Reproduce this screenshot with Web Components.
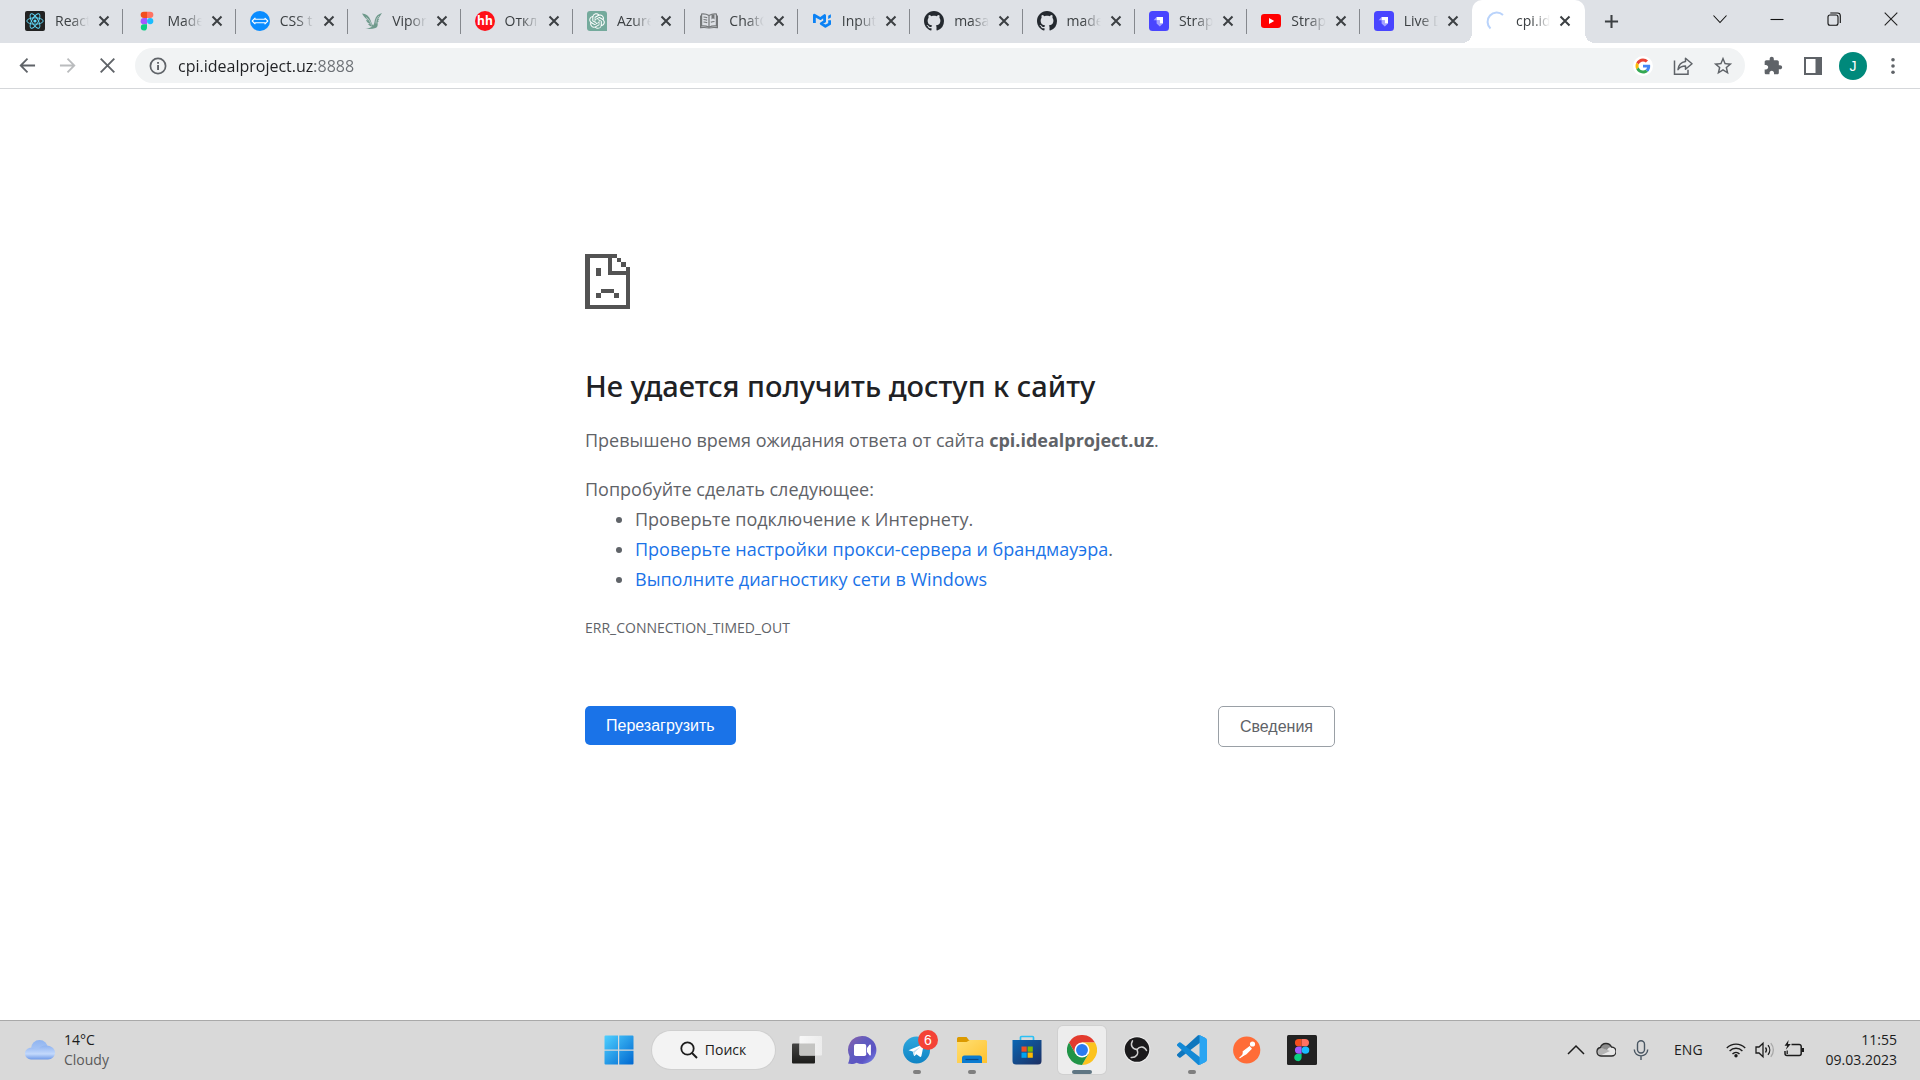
<!DOCTYPE html>
<html lang="ru">
<head>
<meta charset="utf-8">
<title>cpi.idealproject.uz</title>
<style>
html, body { margin: 0; height: 100%; }
body { font-family: "Open Sans", "Noto Sans", sans-serif; background: #fff; color: #202124; overflow: hidden; }
</style>
</head>
<body>
<desktop-screen></desktop-screen>
<script>
const ICONS = {
  react: ['0 0 20 20', '<rect width="20" height="20" rx="2" fill="#222"/><g fill="none" stroke="#61dafb" stroke-width=".9"><ellipse cx="10" cy="10" rx="8.2" ry="3.2"/><ellipse cx="10" cy="10" rx="8.2" ry="3.2" transform="rotate(60 10 10)"/><ellipse cx="10" cy="10" rx="8.2" ry="3.2" transform="rotate(120 10 10)"/></g><circle cx="10" cy="10" r="1.6" fill="#61dafb"/>'],
  figma: ['0 0 20 20', '<path d="M10 .7H6.8a3.1 3.1 0 0 0 0 6.3H10z" fill="#f24e1e"/><path d="M10 .7h3.2a3.1 3.1 0 0 1 0 6.3H10z" fill="#ff7262"/><path d="M10 7H6.8a3.1 3.1 0 0 0 0 6.3H10z" fill="#a259ff"/><circle cx="13.2" cy="10.1" r="3.15" fill="#1abcfe"/><path d="M10 13.3H6.8A3.1 3.1 0 1 0 10 16.4z" fill="#0acf83"/>'],
  css: ['0 0 20 20', '<circle cx="10" cy="10" r="10" fill="#0a8cff"/><path d="M2.200 10 5 7.200v1h10v-1L17.800 10 15 12.800v-1H5v1z" fill="#0a8cff" stroke="#fff" stroke-width="1.100" stroke-linejoin="round"/>'],
  bird: ['0 0 20 20', '<g fill="#6f9a8c"><path d="M0 2.500c4 .3 7 2.500 8.500 6.500.8 2.500 1.500 5 4 6.500-3 .5-5.300-.5-6.500-2.500l2-.3C5.500 12 4.500 10.500 4 9l2 .3C3.500 7.500 1.500 5.500 0 2.500z"/><path d="M20 2c-3.500 1-6.200 3-7 6.500-.8 3-.5 5.500-3.500 7.500-2 1.300-4.500 1.500-6.500 1.500 3.500.8 7.500.5 10.500-.5 2.200-.8 2.500-3 2-5.500l1.500-1.500-1.300.2 1.800-2.400-1.500.5z"/></g><path d="M4 6.500c3 1.500 4.500 4.500 5.500 8M17 5c-2 1.800-3 4-3 7.500" stroke="#dee1e6" stroke-width=".6" fill="none"/>'],
  hh: ['0 0 20 20', '<circle cx="10" cy="10" r="10" fill="#ff0f18"/><text x="10" y="14.200" font-size="12" font-weight="700" text-anchor="middle" fill="#fff" font-family="Open Sans, sans-serif">hh</text>'],
  openai: ['0 0 40 40', '<path d="M6 0h28a6 6 0 0 1 6 6v34H6a6 6 0 0 1-6-6V6a6 6 0 0 1 6-6z" fill="#74aa9c"/><path transform="translate(4.500 4.500) scale(1.300)" fill="#fff" d="M22.2819 9.8211a5.9847 5.9847 0 0 0-.5157-4.9108 6.0462 6.0462 0 0 0-6.5098-2.9A6.0651 6.0651 0 0 0 4.9807 4.1818a5.9847 5.9847 0 0 0-3.9977 2.9 6.0462 6.0462 0 0 0 .7427 7.0966 5.98 5.98 0 0 0 .511 4.9107 6.051 6.051 0 0 0 6.5146 2.9001A5.9847 5.9847 0 0 0 13.2599 24a6.0557 6.0557 0 0 0 5.7718-4.2058 5.9894 5.9894 0 0 0 3.9977-2.9001 6.0557 6.0557 0 0 0-.7475-7.0729zm-9.022 12.6081a4.4755 4.4755 0 0 1-2.8764-1.0408l.1419-.0804 4.7783-2.7582a.7948.7948 0 0 0 .3927-.6813v-6.7369l2.02 1.1686a.071.071 0 0 1 .038.052v5.5826a4.504 4.504 0 0 1-4.4945 4.4944zm-9.6607-4.1254a4.4708 4.4708 0 0 1-.5346-3.0137l.142.0852 4.783 2.7582a.7712.7712 0 0 0 .7806 0l5.8428-3.3685v2.3324a.0804.0804 0 0 1-.0332.0615L9.74 19.9502a4.4992 4.4992 0 0 1-6.1408-1.6464zM2.3408 7.8956a4.485 4.485 0 0 1 2.3655-1.9728V11.6a.7664.7664 0 0 0 .3879.6765l5.8144 3.3543-2.0201 1.1685a.0757.0757 0 0 1-.071 0l-4.8303-2.7865A4.504 4.504 0 0 1 2.3408 7.872zm16.5963 3.8558L13.1038 8.364 15.1192 7.2a.0757.0757 0 0 1 .071 0l4.8303 2.7913a4.4944 4.4944 0 0 1-.6765 8.1042v-5.6772a.79.79 0 0 0-.407-.667zm2.0107-3.0231l-.142-.0852-4.7735-2.7818a.7759.7759 0 0 0-.7854 0L9.409 9.2297V6.8974a.0662.0662 0 0 1 .0284-.0615l4.8303-2.7866a4.4992 4.4992 0 0 1 6.6802 4.66zM8.3065 12.863l-2.02-1.1638a.0804.0804 0 0 1-.038-.0567V6.0742a4.4992 4.4992 0 0 1 7.3757-3.4537l-.142.0805L8.704 5.459a.7948.7948 0 0 0-.3927.6813zm1.0976-2.3654l2.602-1.4998 2.6069 1.4998v2.9994l-2.5974 1.4997-2.6067-1.4997Z"/>'],
  book: ['0 0 20 20', '<g fill="none" stroke="#747779" stroke-width="1.200"><path d="M10 4.500C7.500 3 5 2.800 2.600 3v12c2.600-.2 5 0 7.400 1.300 2.400-1.300 4.800-1.500 7.400-1.300V3c-2.400-.2-4.900 0-7.400 1.500zv11.800"/><path d="M4.500 6c1.400 0 2.500.2 3.700.8M4.500 8.500c1.400 0 2.500.2 3.700.8M4.500 11c1.400 0 2.500.2 3.700.8M15.500 10.500c-1.400 0-2.500.2-3.700.8"/><path d="M1.600 4.500v12.200c3-.3 6-.2 8.400.3 2.400-.5 5.400-.6 8.400-.3V4.500"/></g><path d="M12.500 3.500h3v5l-1.500-1.300-1.500 1.300z" fill="#747779"/>'],
  mui: ['0 0 20 20', '<path d="M2.400 12V4.200l6 3.400 4.200-3v5.800L9.200 12.600l4.200 2.700 4.200-2.400V9.300" fill="none" stroke="#0b82f5" stroke-width="2.800" stroke-linejoin="round"/><path d="M16.200 4.800l2.700-1.500v3.200l-2.700 1.500z" fill="#0b82f5"/>'],
  github: ['0 0 16 16', '<path fill="#24292f" d="M8 0C3.580 0 0 3.580 0 8c0 3.540 2.290 6.530 5.470 7.590.4.070.55-.17.55-.38 0-.19-.01-.82-.01-1.490-2.010.37-2.530-.49-2.690-.94-.09-.23-.48-.94-.82-1.130-.28-.15-.68-.52-.01-.53.63-.01 1.080.58 1.230.82.720 1.210 1.870.87 2.330.66.070-.52.280-.87.510-1.070-1.780-.2-3.640-.89-3.640-3.950 0-.87.310-1.590.820-2.150-.08-.2-.36-1.020.08-2.120 0 0 .67-.21 2.200.82.640-.18 1.320-.27 2-.27s1.360.09 2 .27c1.530-1.040 2.200-.82 2.200-.82.440 1.100.160 1.920.080 2.120.510.560.820 1.270.820 2.150 0 3.070-1.870 3.750-3.650 3.950.290.250.540.730.540 1.480 0 1.070-.01 1.930-.01 2.200 0 .21.150.460.550.380A8.010 8.010 0 0 0 16 8c0-4.420-3.580-8-8-8z"/>'],
  strapi: ['0 0 20 20', '<rect width="20" height="20" rx="3.500" fill="#4945ff"/><path d="M4.600 9.200 7.600 6v3.200h3.200v6.400l-3.200-3V9.200zM10.800 15.600l3.200-3h-3.200z" fill="#a5a2ff"/><path d="M7.600 6h6.400v6.600h-3.200V9.200H7.600z" fill="#fff"/>'],
  youtube: ['0 0 20 20', '<rect y="3" width="20" height="14" rx="3.200" fill="#f00"/><path d="M8 7v6l5.200-3z" fill="#fff"/>'],
  spinner: ['0 0 20 20', '<path d="M4.500 17.500A9 9 0 0 1 17 4" fill="none" stroke="#b9d3fb" stroke-width="2"/>'],
  close: ['0 0 12 12', '<path d="M1.500 1.500l9 9M10.500 1.500l-9 9" stroke="#3c4043" stroke-width="2"/>'],
  plus: ['0 0 16 16', '<path d="M8 1v14M1 8h14" stroke="#3c4043" stroke-width="2.200"/>'],
  chev: ['0 0 14 14', '<path d="M.5 3.500 7 10.500l6.500-7" fill="none" stroke="#111" stroke-width="1.100"/>'],
  mini: ['0 0 14 14', '<path d="M.5 7.500h13" stroke="#111" stroke-width="1.100"/>'],
  restore: ['0 0 14 14', '<rect x="1" y="3" width="10" height="10.300" rx="2" fill="none" stroke="#111" stroke-width="1.100"/><path d="M3.300 1h7.200a2.800 2.800 0 0 1 2.800 2.800v7.200" fill="none" stroke="#111" stroke-width="1.100"/>'],
  winclose: ['0 0 14 14', '<path d="M.7.7l12.600 12.600M13.300.7.7 13.300" stroke="#222" stroke-width="1.100"/>'],
  back: ['0 0 18 18', '<path d="M17 9H2M9 1.800 1.800 9 9 16.200" fill="none" stroke="#5f6368" stroke-width="1.900"/>'],
  fwd: ['0 0 18 18', '<path d="M1 9h15M9 1.800 16.200 9 9 16.200" fill="none" stroke="#babcbe" stroke-width="1.900"/>'],
  stop: ['0 0 18 18', '<path d="M1.800 1.800l14.400 14.400M16.200 1.800 1.800 16.200" stroke="#5f6368" stroke-width="2"/>'],
  info: ['0 0 18 18', '<circle cx="9" cy="9" r="7.600" fill="none" stroke="#5f6368" stroke-width="1.700"/><path d="M8.100 8h1.900v5H8.100zM8.100 5h1.900v1.800H8.100z" fill="#5f6368"/>'],
  google: ['-8 -8 64 64', '<circle cx="24" cy="24" r="32" fill="#fff"/><path fill="#EA4335" d="M24 9.500c3.540 0 6.710 1.220 9.210 3.600l6.850-6.850C35.900 2.380 30.470 0 24 0 14.620 0 6.510 5.380 2.560 13.220l7.980 6.190C12.430 13.720 17.740 9.500 24 9.500z"/><path fill="#4285F4" d="M46.980 24.550c0-1.570-.15-3.090-.38-4.550H24v9.020h12.940c-.58 2.960-2.260 5.480-4.780 7.180l7.730 6c4.510-4.180 7.090-10.360 7.090-17.650z"/><path fill="#FBBC05" d="M10.530 28.590c-.48-1.450-.76-2.990-.76-4.590s.27-3.140.76-4.590l-7.980-6.190C.92 16.460 0 20.120 0 24c0 3.880.92 7.540 2.560 10.780l7.970-6.190z"/><path fill="#34A853" d="M24 48c6.480 0 11.930-2.130 15.890-5.810l-7.730-6c-2.150 1.450-4.920 2.300-8.160 2.300-6.260 0-11.570-4.220-13.470-9.910l-7.980 6.190C6.510 42.620 14.620 48 24 48z"/>'],
  share: ['0 0 20 20', '<g fill="none" stroke="#5f6368" stroke-width="1.500"><path d="M1.500 4.500v13.800h13.500v-4.500"/><path d="M12.500 2.200 19 7.700l-6.500 5.500v-3.200c-3.500 0-5.700 1-7.500 3.600.5-4.300 3-7.500 7.500-8.100z" stroke-linejoin="round"/></g>'],
  star: ['0 0 24 24', '<path fill="#5f6368" d="M22 9.240l-7.190-.62L12 2 9.190 8.630 2 9.240l5.460 4.730L5.820 21 12 17.270 18.180 21l-1.630-7.030L22 9.240zM12 15.400l-3.760 2.270 1-4.280-3.320-2.880 4.380-.38L12 6.100l1.710 4.040 4.380.38-3.320 2.880 1 4.280L12 15.400z"/>'],
  puzzle: ['0 0 24 24', '<path fill="#5f6368" d="M20.500 11H19V7c0-1.100-.9-2-2-2h-4V3.500C13 2.120 11.880 1 10.500 1S8 2.120 8 3.500V5H4c-1.100 0-1.990.9-1.990 2v3.800H3.500c1.490 0 2.700 1.210 2.700 2.700s-1.210 2.700-2.700 2.700H2V20c0 1.100.9 2 2 2h3.800v-1.500c0-1.490 1.210-2.700 2.700-2.700 1.490 0 2.700 1.210 2.700 2.700V22H17c1.100 0 2-.9 2-2v-4h1.500c1.380 0 2.500-1.120 2.500-2.500S21.880 11 20.500 11z"/>'],
  panel: ['0 0 18 18', '<path d="M1 1h16v16H1z" fill="none" stroke="#5f6368" stroke-width="2"/><path d="M11.500 1H17v16h-5.500z" fill="#5f6368"/>'],
  dots: ['0 0 18 18', '<g fill="#5f6368"><circle cx="9" cy="2.700" r="1.800"/><circle cx="9" cy="9" r="1.800"/><circle cx="9" cy="15.300" r="1.800"/></g>'],
  sad: ['0 0 10 13', '<path fill="#535353" shape-rendering="crispEdges" d="M0 0h7v1H6v3h4v9H0zM1 1v11h8V5H5V1zM7 1h1v1H7zM8 2h1v1H8zM9 3h1v1H9zM2.500 3.200h1v2h-1zM3.500 8.300h3v1h-3zM2.500 9.300h1v1h-1zM6.500 9.300h1v1h-1z" fill-rule="evenodd"/>'],
  cloud: ['0 0 30 20', '<defs><linearGradient id="a" x1="0" y1="0" x2="0" y2="1"><stop offset="0" stop-color="#8fb4f0"/><stop offset="1" stop-color="#b9d2fa"/></linearGradient><linearGradient id="b" x1="0" y1="0" x2="0" y2="1"><stop offset="0" stop-color="#8fb3f0"/><stop offset=".6" stop-color="#c3d9fc"/><stop offset="1" stop-color="#6f9ae8"/></linearGradient></defs><circle cx="14.500" cy="8.500" r="8.500" fill="url(#a)"/><path d="M6 7.800c2.500 0 4.500 1 6 2.700C14 7.200 17 5.500 21 5.500c5 0 9 3 9 7s-3 7-7 7H6a6 6 0 0 1-6-6c0-3.200 2.500-5.700 6-5.700z" fill="url(#b)"/>'],
  start: ['0 0 30 30', '<defs><linearGradient id="a" x1="0" y1="0" x2="1" y2="1"><stop offset="0" stop-color="#4fd0ff"/><stop offset="1" stop-color="#0067d0"/></linearGradient></defs><path fill="url(#a)" d="M1.500.5H14v14H.5v-13a1 1 0 0 1 1-1zM15.200.5h13.300a1 1 0 0 1 1 1v13H15.200zM.5 15.700H14v13.800H1.500a1 1 0 0 1-1-1zM15.200 15.700h14.300v12.800a1 1 0 0 1-1 1H15.200z"/>'],
  search: ['0 0 18 18', '<circle cx="7.500" cy="7.500" r="6.200" fill="none" stroke="#1c1c1c" stroke-width="1.800"/><path d="M12 12l5 5" stroke="#1c1c1c" stroke-width="1.900"/>'],
  taskview: ['0 0 30 30', '<defs><linearGradient id="a" x1="0" y1="0" x2="0" y2="1"><stop offset="0" stop-color="#444"/><stop offset="1" stop-color="#1c1c1a"/></linearGradient><linearGradient id="b" x1="0" y1="0" x2="1" y2="0"><stop offset="0" stop-color="#f8f8f8"/><stop offset="1" stop-color="#ececec"/></linearGradient></defs><rect x="0" y="8.500" width="23" height="20" rx="1" fill="url(#a)"/><rect x="7.500" y="1" width="22.500" height="19.500" rx="1" fill="url(#b)"/><path d="M7.500 8.500H23v12H8.500a1 1 0 0 1-1-1z" fill="#c4c4c2"/>'],
  chat: ['0 0 30 30', '<defs><linearGradient id="a" x1="0" y1="0" x2="1" y2="1"><stop offset="0" stop-color="#8c62a8"/><stop offset=".4" stop-color="#5f5bc0"/><stop offset=".7" stop-color="#5c54c4"/><stop offset="1" stop-color="#7c8ff0"/></linearGradient></defs><path d="M15.500 1a14 14 0 1 1-6 26.700C7.500 29 4 29.300 1 28.500c1.200-2.500 1.500-4.500 1.600-7A14 14 0 0 1 15.500 1z" fill="url(#a)"/><rect x="7" y="9" width="12.200" height="12" rx="1.800" fill="#fff"/><path d="M20 13l2.500-3.200a.8.8 0 0 1 1.400.4v9.600a.8.8 0 0 1-1.400.4L20 17z" fill="#fff"/>'],
  telegram: ['0 0 30 30', '<defs><linearGradient id="a" x1="0" y1="0" x2="0" y2="1"><stop offset="0" stop-color="#2ea8de"/><stop offset="1" stop-color="#0f83c4"/></linearGradient></defs><circle cx="14.500" cy="15" r="13.500" fill="url(#a)"/><path d="M6.500 15.300 20.500 9.500c.8-.3 1.300.1 1.100 1l-2.200 10.600c-.2.800-.8 1-1.500.6l-3.500-2.500-1.800 1.700c-.4.3-.6.200-.7-.3l-1.200-4z" fill="#fff"/><path d="M11 16.600l7.800-5-6.200 6-.3 3.400z" fill="#b9dcef"/>'],
  explorer: ['0 0 30 30', '<defs><linearGradient id="a" x1="0" y1="0" x2="1" y2="1"><stop offset="0" stop-color="#ffdf74"/><stop offset="1" stop-color="#ffc22e"/></linearGradient></defs><path d="M0 3.500V8h13V5.200h-1L9.500 2h-8A1.500 1.500 0 0 0 0 3.500z" fill="#dc9a00"/><path d="M0 7h9.500l3.500-2h15.500A1.500 1.500 0 0 1 30 6.500V28H0z" fill="url(#a)"/><path d="M5 28v-5a2.500 2.500 0 0 1 2.500-2.500h15A2.500 2.500 0 0 1 25 23v5z" fill="#0b7bd0"/><path d="M8.500 24.500h13" stroke="#0a4a87" stroke-width="1.200"/>'],
  store: ['0 0 30 30', '<defs><linearGradient id="a" x1="0" y1="0" x2="1" y2="1"><stop offset="0" stop-color="#0a67b4"/><stop offset="1" stop-color="#1d2f63"/></linearGradient></defs><path d="M8.500 5.500V2.500a1 1 0 0 1 1-1h11a1 1 0 0 1 1 1v3" fill="none" stroke="#2cc1f5" stroke-width="1.700"/><path d="M.5 5h29v21a3.500 3.500 0 0 1-3.500 3.500H4A3.500 3.500 0 0 1 .5 26z" fill="url(#a)"/><path d="M9.500 11.500h5.200v5.200H9.500z" fill="#f25022"/><path d="M15.600 11.500h5.200v5.200h-5.200z" fill="#7fba00"/><path d="M9.500 17.600h5.200v5.200H9.500z" fill="#00a4ef"/><path d="M15.600 17.600h5.200v5.200h-5.200z" fill="#ffb900"/>'],
  chrome: ['0 0 48 48', '<path d="M24 12h20.800A24 24 0 0 0 3.200 12l10.400 18z" fill="#e33b2e"/><path d="M34.400 30 24 48A24 24 0 0 0 44.800 12H24z" fill="#fcc31e"/><path d="M13.600 30 3.200 12A24 24 0 0 0 24 48l10.400-18z" fill="#219447"/><circle cx="24" cy="24" r="12" fill="#fff"/><circle cx="24" cy="24" r="9.500" fill="#2b7bf0"/>'],
  obs: ['0 0 30 30', '<circle cx="15" cy="14.500" r="13.300" fill="#eee"/><circle cx="15" cy="14.500" r="12.300" fill="#1b1a1c"/><g fill="none" stroke="#cfcfcf" stroke-width="1.500" stroke-linecap="round"><path d="M15 14.500c-4.800-.5-7-4.500-4.500-8.700"/><path d="M15 14.500c2.800-3.700 7.400-3.500 9.500 1"/><path d="M15 14.500c2 4.500-.8 8.300-5.800 8"/></g>'],
  vscode: ['0 0 100 100', '<path fill="#0f76bd" d="M96 11 76 1a6 6 0 0 0-7 1L1.300 63.600a4.200 4.200 0 0 0 0 6.200l5.500 5a4.200 4.200 0 0 0 5.300.2L93 13.400z"/><path fill="#1389d6" d="M96 89 76 99a6 6 0 0 1-7-1L1.300 36.400a4.200 4.200 0 0 1 0-6.200l5.500-5a4.200 4.200 0 0 1 5.300-.2L93 86.600z"/><path fill="#2aa5f2" d="M75.900 99.100a6.200 6.200 0 0 1-7.100-1.200 3.700 3.700 0 0 0 6.200-2.600V4.700a3.700 3.700 0 0 0-6.200-2.600A6.200 6.200 0 0 1 75.900.9l20.600 9.900a6.200 6.200 0 0 1 3.500 5.600v67.200a6.200 6.200 0 0 1-3.500 5.600z"/>'],
  postman: ['0 0 30 30', '<circle cx="14.700" cy="15" r="13.600" fill="#ff6c37"/><circle cx="20.500" cy="9" r="2.600" fill="#fff"/><path d="M18 11.500l2 2.200-5.500 5.500-6.500 3.600 2.500-3.500.3-2.300z" fill="#fff"/><path d="M10.800 17l7.200-5.500M7.500 23l6-4.500" stroke="#fff" stroke-width="1.100"/>'],
  figmaApp: ['0 0 30 30', '<rect width="30" height="30" rx="1.500" fill="#222"/><g transform="translate(-.2 3.200) scale(1.480 1.180)"><path d="M10 .7H8a2.500 3.100 0 0 0 0 6.200h2z" fill="#f24e1e"/><path d="M10 .7h2.300a2.700 3.100 0 0 1 0 6.200H10z" fill="#ff7262"/><path d="M10 7H8a2.500 3.100 0 0 0 0 6.200h2z" fill="#a259ff"/><ellipse cx="12.600" cy="10.100" rx="2.600" ry="3.150" fill="#1abcfe"/><path d="M10 13.300H8a2.500 3.100 0 1 0 2 3.100z" fill="#0acf83"/></g>'],
  up: ['0 0 20 20', '<path d="M2 14l8-8 8 8" fill="none" stroke="#1c1c1c" stroke-width="1.500"/>'],
  onedrive: ['0 0 20 20', '<path d="M5 16a4.300 4.300 0 0 1-.6-8.500A6 6 0 0 1 15.500 7a4.500 4.500 0 0 1 0 9z" fill="#e8e8e8"/><path d="M1.300 10.500C2 8.500 4 7.500 6 8l8 3-9.500 4.500c-2 0-4-2-3.200-5z" fill="#b5b5b5"/><path d="M4.600 7.700c2-5 8.700-5 10.900-.6-2 0-3.500 1-4.500 2.900z" fill="#8d8d8d"/><path d="M5 16a4.300 4.300 0 0 1-.6-8.500A6 6 0 0 1 15.500 7a4.500 4.500 0 0 1 0 9z" fill="none" stroke="#2b2b2b" stroke-width="1.300"/>'],
  mic: ['0 0 20 20', '<g fill="none" stroke="#4a5763" stroke-width="1.400"><rect x="6.500" y=".8" width="7" height="12.200" rx="3.500"/><path d="M3.300 9.500c0 8.500 13.400 8.500 13.400 0M10 16v4"/></g>'],
  wifi: ['0 0 20 20', '<g fill="none" stroke="#1c1c1c" stroke-width="1.400"><path d="M.8 8C6 2.800 14 2.800 19.200 8M3.600 11c3.600-3.600 9.200-3.600 12.800 0M6.500 13.900c2-2 5-2 7 0"/></g><circle cx="10" cy="15.800" r="1.700" fill="#1c1c1c"/>'],
  volume: ['0 0 20 20', '<path d="M1 7v6h3l4 3.800V3.200L4 7zM10.500 7.500c1.200 1.500 1.200 3.500 0 5M13 5.200c2.300 2.800 2.300 6.800 0 9.600" fill="none" stroke="#1c1c1c" stroke-width="1.300"/><path d="M15.800 3.200c3.400 4 3.400 9.600 0 13.600" fill="none" stroke="#a8a8a8" stroke-width="1.300"/>'],
  battery: ['0 0 20 20', '<path d="M7.500 4.500h7.700a2 2 0 0 1 2 2v7a2 2 0 0 1-2 2H3a2 2 0 0 1-2-2V11" fill="none" stroke="#1c1c1c" stroke-width="1.500"/><path d="M17.500 8h2.500v4h-2.500zM4.600 0 .6 5.800h2.600L1.800 9.800 6.800 4H4z" fill="#1c1c1c"/><path d="M3.200 10.500v3.500" stroke="#1c1c1c" stroke-width="1.300"/>']
};

function define(name, html, setup) {
  const template = document.createElement('template');
  template.innerHTML = html;
  customElements.define(name, class extends HTMLElement {
    connectedCallback() {
      if (this.shadowRoot) return;
      const root = this.attachShadow({ mode: 'open' });
      const content = template.content.cloneNode(true);
      if (setup) setup(this, content);
      root.append(content);
    }
  });
}

/* Vector icon: <ui-icon name="…" size="…"> */
define('ui-icon', `<style>:host{display:inline-flex;flex:none} svg{display:block}</style>`, (host, content) => {
  const [box, body] = ICONS[host.getAttribute('name')];
  const w = host.getAttribute('size') || 20;
  const h = host.getAttribute('height') || w;
  const holder = document.createElement('template');
  holder.innerHTML = `<svg width="${w}" height="${h}" viewBox="${box}" preserveAspectRatio="none" aria-hidden="true">${body}</svg>`;
  content.append(holder.content);
});

define('icon-button', `<style>
:host{display:flex;flex:none}
button{display:flex;align-items:center;justify-content:center;width:var(--w,40px);height:var(--h,35px);padding:0;border:0;background:none;border-radius:4px}
</style><button type="button"><slot></slot></button>`, (host, content) => {
  content.querySelector('button').setAttribute('aria-label', host.getAttribute('label'));
});

define('browser-tab', `<style>
:host{display:flex;flex:0 1 240px;min-width:0;height:43px;box-sizing:border-box;align-items:center;padding:0 9px 2px 14px;position:relative}
:host::after{content:"";position:absolute;right:0;top:9px;width:1px;height:25px;background:#85888d}
:host([last])::after{display:none}
:host([active]){background:#fff;border-radius:10px 10px 0 0;padding-right:10px}
:host([active])::before,:host([active])::after{content:"";display:block;position:absolute;top:auto;bottom:0;width:10px;height:10px;right:auto}
:host([active])::before{left:-10px;background:radial-gradient(circle at 0 0,transparent 10px,#fff 10px)}
:host([active])::after{left:100%;background:radial-gradient(circle at 100% 0,transparent 10px,#fff 10px)}
span{flex:1;min-width:0;margin-left:10px;margin-right:5px;overflow:hidden;white-space:nowrap;font-size:14px;line-height:20px;color:#3c4043;-webkit-mask-image:linear-gradient(90deg,#000 calc(100% - 18px),transparent);mask-image:linear-gradient(90deg,#000 calc(100% - 18px),transparent)}
button{display:flex;align-items:center;justify-content:center;flex:none;width:20px;height:20px;padding:0;border:0;background:none}
</style><ui-icon class="favicon"></ui-icon><span><slot></slot></span><button type="button" aria-label="Закрыть вкладку"><ui-icon name="close" size="12"></ui-icon></button>`, (host, content) => {
  content.querySelector('.favicon').setAttribute('name', host.getAttribute('icon'));
});

define('tab-strip', `<style>
:host{display:flex;height:43px;background:#dee1e6}
.tabs{flex:1;display:flex;min-width:0;padding-left:11px}
.new{--w:28px;--h:28px;margin:7px 0 0 12px}
.window{display:flex;margin-left:66px;padding-right:1px;--w:57px;--h:38px}
</style>
<div class="tabs">
<browser-tab icon="react">React</browser-tab><browser-tab icon="figma">Made</browser-tab><browser-tab icon="css">CSS t</browser-tab><browser-tab icon="bird">Vipor</browser-tab><browser-tab icon="hh">Откл</browser-tab><browser-tab icon="openai">Azure</browser-tab><browser-tab icon="book">ChatG</browser-tab><browser-tab icon="mui">Input</browser-tab><browser-tab icon="github">masa</browser-tab><browser-tab icon="github">made</browser-tab><browser-tab icon="strapi">Strap</browser-tab><browser-tab icon="youtube">Strap</browser-tab><browser-tab icon="strapi" last>Live D</browser-tab><browser-tab icon="spinner" active>cpi.id</browser-tab>
</div>
<icon-button class="new" label="Новая вкладка"><ui-icon name="plus" size="15"></ui-icon></icon-button>
<div class="window">
<icon-button label="Поиск вкладок"><ui-icon name="chev" size="14"></ui-icon></icon-button>
<icon-button label="Свернуть"><ui-icon name="mini" size="14"></ui-icon></icon-button>
<icon-button label="Восстановить"><ui-icon name="restore" size="14"></ui-icon></icon-button>
<icon-button label="Закрыть"><ui-icon name="winclose" size="14"></ui-icon></icon-button>
</div>`);

define('tool-bar', `<style>
:host{display:flex;align-items:center;height:45px;padding:0 7px;border-bottom:1px solid #d5d7da;background:#fff}
.box{flex:1;display:flex;align-items:center;height:35px;margin:0 8px;border-radius:18px;background:#f1f3f4;padding:0 2px 0 14px}
input{flex:1;min-width:0;margin:0 0 0 11px;padding:0;border:0;outline:0;height:26px;font:16px/26px "Open Sans","Noto Sans",sans-serif;color:transparent;background:linear-gradient(90deg,#202124 137px,#6b6f74 137px);-webkit-background-clip:text;background-clip:text}
.avatar{display:flex;align-items:center;justify-content:center;width:28px;height:28px;border-radius:50%;background:#00897b;color:#fff;font-size:14px;line-height:20px}
</style>
<icon-button label="Назад"><ui-icon name="back" size="17"></ui-icon></icon-button>
<icon-button label="Вперёд"><ui-icon name="fwd" size="17"></ui-icon></icon-button>
<icon-button label="Остановить"><ui-icon name="stop" size="17"></ui-icon></icon-button>
<div class="box"><ui-icon name="info" size="18"></ui-icon><input type="text" aria-label="Адресная строка" value="cpi.idealproject.uz:8888">
<icon-button label="Google"><ui-icon name="google" size="20"></ui-icon></icon-button>
<icon-button label="Поделиться"><ui-icon name="share" size="20"></ui-icon></icon-button>
<icon-button label="Добавить в закладки"><ui-icon name="star" size="22"></ui-icon></icon-button></div>
<icon-button label="Расширения"><ui-icon name="puzzle" size="20"></ui-icon></icon-button>
<icon-button label="Боковая панель"><ui-icon name="panel" size="18"></ui-icon></icon-button>
<icon-button label="Профиль"><span class="avatar">J</span></icon-button>
<icon-button label="Меню"><ui-icon name="dots" size="18"></ui-icon></icon-button>`);

define('error-page', `<style>
:host{display:block;flex:1;min-height:0;background:#fff}
main{box-sizing:border-box;max-width:750px;margin:0 auto;padding-top:165px;color:#5f6368;font-size:18px;line-height:30px}
ui-icon{display:block;height:55px}
h1{margin:59px 0 21px;font-family:"Noto Sans","Open Sans",sans-serif;font-size:29px;line-height:36px;font-weight:500;color:#202124}
p{margin:0}
.first{margin-bottom:19px}
ul{margin:0 0 22px;padding:0 0 0 50px}
a{color:#1a73e8;text-decoration:none}
.code{font-size:14px;line-height:24px}
.actions{display:flex;justify-content:space-between;align-items:flex-start;margin-top:66px}
button{font:16px/19px "Liberation Sans",Arial,sans-serif;padding:10px 21px;border-radius:5px;border:0;background:#1a73e8;color:#fff}
button.plain{border:1px solid #9aa0a6;background:#fff;color:#5f6368}
</style>
<main>
<ui-icon name="sad" size="45" height="55"></ui-icon>
<h1>Не удается получить доступ к сайту</h1>
<p class="first">Превышено время ожидания ответа от сайта <strong>cpi.idealproject.uz</strong>.</p>
<p>Попробуйте сделать следующее:</p>
<ul><li>Проверьте подключение к Интернету.</li><li><a href="#proxy">Проверьте настройки прокси-сервера и брандмауэра</a>.</li><li><a href="#diagnose">Выполните диагностику сети в Windows</a></li></ul>
<p class="code">ERR_CONNECTION_TIMED_OUT</p>
<div class="actions"><button type="button">Перезагрузить</button><button type="button" class="plain">Сведения</button></div>
</main>`);

/* Taskbar entry; "running" draws the short pill, "active" the tile and the long pill */
define('task-item', `<style>
:host{display:flex;flex:none;justify-content:center;width:55px}
button{position:relative;display:flex;align-items:center;justify-content:center;width:48px;height:48px;padding:0;border:0;border-radius:5px;background:none}
:host([active]) button{background:#ededed;box-shadow:0 0 0 1px #d0d0d0}
:host([running]) button::after{content:"";position:absolute;bottom:0;left:50%;margin-left:-4px;width:8px;height:4px;border-radius:2px;background:#7f7f7f}
:host([active]) button::after{margin-left:-10px;width:20px;background:#5f7683}
b{position:absolute;top:4px;right:3px;width:20px;height:20px;border-radius:50%;background:#f44336;color:#fff;font-size:14px;font-weight:400;line-height:20px;text-align:center}
b:empty{display:none}
</style><button type="button"><ui-icon size="30"></ui-icon><b></b></button>`, (host, content) => {
  content.querySelector('ui-icon').setAttribute('name', host.getAttribute('icon'));
  content.querySelector('b').textContent = host.getAttribute('badge') || '';
  content.querySelector('button').setAttribute('aria-label', host.getAttribute('label'));
});

define('task-bar', `<style>
:host{display:grid;grid-template-columns:1fr auto 1fr;align-items:center;height:59px;border-top:1px solid #a9a9a9;background:#d9d9d9;color:#1c1c1c;font-size:14px;line-height:20px}
.weather{display:flex;align-items:center;gap:9px;padding:0 0 2px 25px}
.weather span{display:block}
.weather span+span{color:#5a5a5a}
.apps{display:flex;align-items:center;padding:0 0 1px 1px}
.search{display:flex;align-items:center;justify-content:center;gap:7px;width:123px;height:38px;margin:0 5px;padding:0;border:0;border-radius:19px;background:#f3f3f3;box-shadow:0 0 0 1px #cfcfcf;color:#1c1c1c;font:14px/20px "Open Sans","Noto Sans",sans-serif}
.tray{display:flex;align-items:center;justify-content:flex-end;padding:0 23px 1px 0;--h:40px}
.clock{text-align:right;margin-left:22px}
.clock time{display:block}
.lang{padding:0 23px 0 13px}
</style>
<div class="weather"><ui-icon name="cloud" size="30" height="20"></ui-icon><div><span>14°C</span><span>Cloudy</span></div></div>
<div class="apps">
<task-item icon="start" label="Пуск"></task-item>
<button class="search" type="button"><ui-icon name="search" size="18"></ui-icon>Поиск</button>
<task-item icon="taskview" label="Представление задач"></task-item>
<task-item icon="chat" label="Чат"></task-item>
<task-item icon="telegram" label="Telegram" badge="6" running></task-item>
<task-item icon="explorer" label="Проводник" running></task-item>
<task-item icon="store" label="Microsoft Store"></task-item>
<task-item icon="chrome" label="Google Chrome" running active></task-item>
<task-item icon="obs" label="OBS Studio"></task-item>
<task-item icon="vscode" label="Visual Studio Code" running></task-item>
<task-item icon="postman" label="Postman"></task-item>
<task-item icon="figmaApp" label="Figma"></task-item>
</div>
<div class="tray">
<icon-button label="Скрытые значки" style="--w:30px"><ui-icon name="up"></ui-icon></icon-button>
<icon-button label="OneDrive" style="--w:30px"><ui-icon name="onedrive"></ui-icon></icon-button>
<icon-button label="Микрофон"><ui-icon name="mic"></ui-icon></icon-button>
<span class="lang">ENG</span>
<icon-button label="Сеть" style="--w:20px"><ui-icon name="wifi"></ui-icon></icon-button>
<icon-button label="Громкость" style="--w:38px"><ui-icon name="volume"></ui-icon></icon-button>
<icon-button label="Батарея" style="--w:20px"><ui-icon name="battery"></ui-icon></icon-button>
<div class="clock"><time>11:55</time><time>09.03.2023</time></div>
</div>`);

define('desktop-screen', `<style>
:host{display:flex;flex-direction:column;height:100vh}
tab-strip,tool-bar,task-bar{flex:none}
</style>
<tab-strip></tab-strip><tool-bar></tool-bar><error-page></error-page><task-bar></task-bar>`);
</script>
</body>
</html>
